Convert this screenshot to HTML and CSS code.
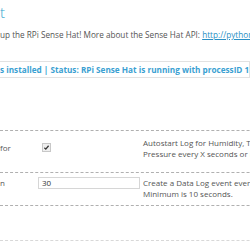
FILE: index.html
```html
<!DOCTYPE html>
<html>
<head>
<meta charset="utf-8">
<link rel="stylesheet" href="styles.css">
</head>
<body>
<div class="page">
  <h2 class="title">t</h2>
  <p class="intro">up the RPi Sense Hat! More about the Sense Hat API: <a href="#">http://pythonhosted.org/sense-hat/</a></p>
  <div class="status">s installed | Status: RPi Sense Hat is running with processID 1842</div>
  <div class="form">
    <div class="row row-auto">
      <div class="label">for</div>
      <div class="field"><span class="check"><svg viewBox="0 0 8 8" width="7" height="7"><path d="M1.6 4.3 L3.2 5.9 L6.4 2" fill="none" stroke="#333" stroke-width="1.4"/></svg></span></div>
      <div class="desc">Autostart Log for Humidity, Temperature and Pressure every X seconds or minutes.</div>
    </div>
    <div class="row row-interval">
      <div class="label">n</div>
      <div class="field"><span class="input">30</span></div>
      <div class="desc">Create a Data Log event every X seconds. Minimum is 10 seconds.</div>
    </div>
    <div class="row row-empty"></div>
    <div class="end"></div>
  </div>
</div>
</body>
</html>
```
FILE: styles.css
```css
html, body {
  margin: 0;
  padding: 0;
  background: #ffffff;
}
body {
  width: 250px;
  height: 250px;
  overflow: hidden;
  font-family: "Open Sans", "DejaVu Sans", sans-serif;
  color: #555555;
}
.page {
  width: 250px;
  overflow: hidden;
}
.title {
  margin: 2px 0 0 0;
  font-size: 15px;
  line-height: 20px;
  font-weight: 300;
  color: #2ea2cc;
}
.intro {
  margin: 7px 0 0 0;
  font-size: 8.2px;
  line-height: 12px;
  white-space: nowrap;
  overflow: hidden;
}
.intro a {
  color: #2a8fc4;
  text-decoration: underline;
}
.status {
  margin: 20px 0 0 -4px;
  border: 1px solid #e2e2e2;
  border-left: none;
  padding: 2px 0 2px 4px;
  font-size: 8.2px;
  line-height: 11px;
  font-weight: 700;
  color: #3a9fd2;
  white-space: nowrap;
  overflow: hidden;
}
.form {
  margin-top: 52px;
  width: 320px;
}
.row {
  display: grid;
  grid-template-columns: 38px 105px 172px;
  border-top: 1px dashed #b0b0b0;
  font-size: 8px;
  line-height: 11px;
}
.row-auto {
  height: 41px;
}
.row-auto .label {
  padding-top: 11px;
}
.row-auto .field {
  padding: 12px 0 0 4px;
}
.row-auto .desc {
  padding-top: 6px;
}
.row-interval {
  height: 32px;
}
.row-interval .label,
.row-interval .desc {
  padding-top: 4px;
}
.row-interval .field {
  padding-top: 4px;
}
.row-empty {
  height: 34px;
}
.end {
  border-top: 1px dashed #d8d8d8;
}
.label {
  white-space: nowrap;
}
.check {
  display: block;
  width: 7px;
  height: 7px;
  border: 1px solid #c8c8c8;
  background: #efefef;
  box-sizing: content-box;
}
.check svg {
  display: block;
}
.input {
  display: block;
  box-sizing: border-box;
  width: 102px;
  height: 12px;
  border: 1px solid #d6d6d6;
  padding-left: 3px;
  line-height: 10px;
  color: #333333;
  background: #ffffff;
}
```
